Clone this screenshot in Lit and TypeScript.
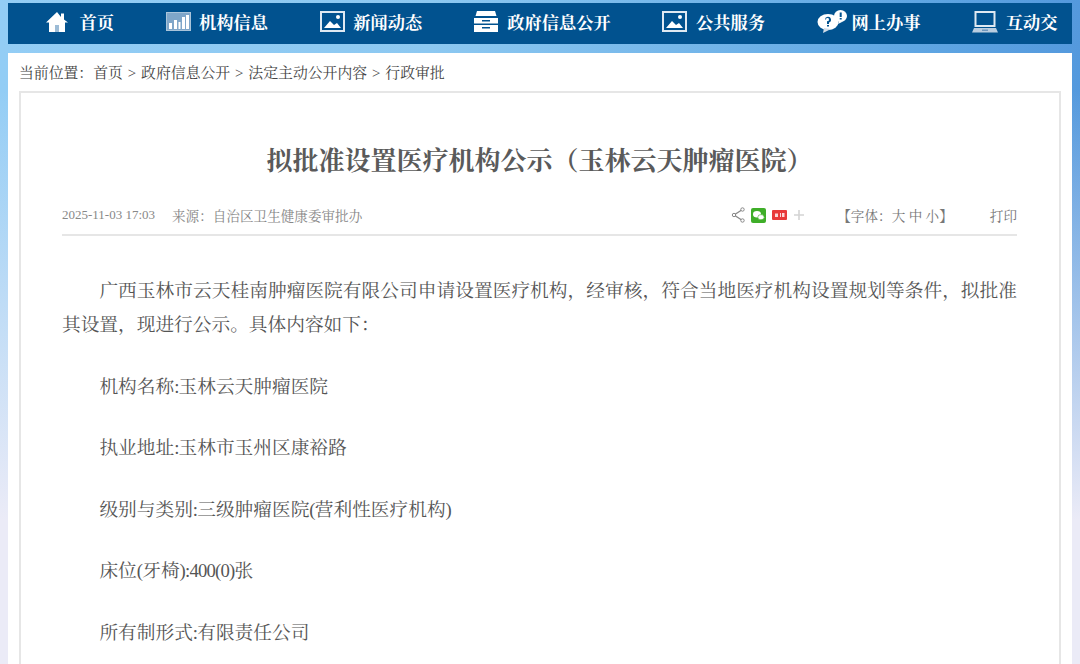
import { LitElement, html, css, svg } from "lit";
import { customElement } from "lit/decorators.js";

const picture = svg`<rect x="1" y="1" width="23" height="19" fill="none" stroke="#dfe9f2" stroke-width="2"/><path d="M4 17l6-7 4 4 3-2 4 5z" fill="#fff"/><circle cx="18" cy="6" r="2" fill="#fff"/>`;
const icons = [
  { w: 22, h: 20, b: svg`<path d="M11 0L0 10.500h3V20h6v-7h4v7h6v-9.500h3L18 7.500V1.500h-3V5z" fill="#fff"/><path d="M9 13h4v7H9z" fill="#9dbcd6"/>` },
  { w: 25, h: 19, b: svg`<rect x=".5" y=".5" width="24" height="18" fill="#7fa6c9" stroke="#a9c4da"/><path d="M3 11h3v6H3zM8 8h3v9H8zM12.500 10h2v7h-2zM16 5h3v12h-3zM20 3h3v14h-3z" fill="#fff"/>` },
  { w: 25, h: 21, b: picture },
  { w: 24, h: 21, b: svg`<path d="M3 0h18l1.500 5h-21z" fill="#fff"/><path d="M0 7h24v14H0z" fill="#fff"/><path d="M0 12.500h24v1.500H0z" fill="#01528f"/><path d="M8 9h8v1.500H8zM8 16h8v1.500H8z" fill="#01528f"/>` },
  { w: 25, h: 21, b: picture },
  { w: 30, h: 23, b: svg`<ellipse cx="11" cy="12" rx="10.500" ry="8" fill="#fff"/><path d="M7 18l-1 5 8-4z" fill="#cfdce8"/><path d="M8 9.500a3 3 0 1 1 4 3v1.500h-2v-3a1.500 1.500 0 1 0-1-1.500zM10 15h2v1.500h-2z" fill="#01528f"/><ellipse cx="23.500" cy="6" rx="6.500" ry="6" fill="#fff"/><path d="M22 11l-1 3 5-2.500z" fill="#fff"/><path d="M22.700 2.500h2v4.500h-2zM22.700 8h2v1.500h-2z" fill="#01528f"/>` },
  { w: 26, h: 22, b: svg`<rect x="3.500" y="1" width="19" height="14" fill="none" stroke="#dfe9f2" stroke-width="2"/><path d="M2 17h22l2 4.500H0z" fill="#b9cde0"/><path d="M10 18.500h6v1.500h-6z" fill="#6f97bd"/>` },
];
const items = ["首页", "机构信息", "新闻动态", "政府信息公开", "公共服务", "网上办事", "互动交"];
const paragraphs = [
  "机构名称:玉林云天肿瘤医院",
  "执业地址:玉林市玉州区康裕路",
  "级别与类别:三级肿瘤医院(营利性医疗机构)",
  "床位(牙椅):400(0)张",
  "所有制形式:有限责任公司",
];

const narrowLatin = (text: string) =>
  text.split(/([:()0-9]+)/).map((part, i) => (i % 2 ? html`<span class="lat">${part}</span>` : part));

@customElement("app-root")
export class AppRoot extends LitElement {
  static styles = css`
    :host {
      display: block;
      width: 1080px;
      height: 664px;
      overflow: hidden;
      box-sizing: border-box;
      padding: 3px 8px 0;
      font-family: "Liberation Serif", "Noto Serif CJK SC", "Noto Sans CJK SC", serif;
      background:
        linear-gradient(to bottom, rgba(235, 235, 247, 0) 0, rgba(235, 235, 247, 0) 90px, #ebebf7 520px),
        linear-gradient(to right, #93cdf5 0, #8cc8f1 40%, #5fa6e3 85%, #5499dd 100%);
    }
    .frame { display: flex; flex-direction: column; gap: 9px; height: 100%; }
    nav {
      flex: none;
      height: 41px;
      box-sizing: border-box;
      background: #01528f;
      display: flex;
      align-items: center;
      gap: 51.6px;
      padding: 0 0 4px 38px;
      overflow: hidden;
    }
    .item { display: flex; align-items: center; flex: none; color: #fff; font-size: 17.25px; font-weight: 700; white-space: nowrap; }
    .ico { width: 33.500px; display: flex; }
    .ico.wide { width: 35px; }
    .panel { flex: 1; min-height: 0; background: #fff; padding: 0 11px; overflow: hidden; }
    .crumb { height: 38px; box-sizing: border-box; padding-bottom: 2px; display: flex; align-items: center; font-size: 14.85px; word-spacing: 1.200px; color: #444; white-space: pre; }
    .card { border: 2px solid #e6e6e6; border-bottom: 0; padding: 0 42px 0 41px; height: 600px; }
    h1 { margin: 0; padding-top: 52px; height: 36px; line-height: 34px; text-align: center; font-size: 26px; font-weight: 700; color: #5a5a5a; }
    .meta {
      margin-top: 15px;
      height: 38px;
      display: flex;
      align-items: center;
      font-size: 13.6px;
      color: #888;
      border-bottom: 2px solid #e6e6e6;
      white-space: pre;
    }
    .date { width: 110px; font-size: 13px; }
    .spacer { flex: 1; }
    .share { display: flex; align-items: center; gap: 6px; }
    .plus { margin-left: 1px; }
    .size { margin-left: 33px; color: #777; }
    .print { margin-left: 37px; color: #777; }
    .body { margin-top: 38px; color: #555; font-size: 18.7px; line-height: 34px; }
    p { margin: 0 0 27.500px; text-indent: 2em; text-align: justify; }
    .lat { letter-spacing: -0.8px; }
  `;

  render() {
    return html`<div class="frame">
      <nav>
        ${items.map((t, i) => html`<div class="item">
          <span class="ico ${i === 5 ? "wide" : ""}"><svg width=${icons[i].w} height=${icons[i].h} viewBox="0 0 ${icons[i].w} ${icons[i].h}">${icons[i].b}</svg></span>${t}
        </div>`)}
      </nav>
      <div class="panel">
        <div class="crumb">当前位置：首页 &gt; 政府信息公开 &gt; 法定主动公开内容 &gt; 行政审批</div>
        <div class="card">
          <h1>拟批准设置医疗机构公示（玉林云天肿瘤医院）</h1>
          <div class="meta">
            <span class="date">2025-11-03 17:03</span><span>来源：自治区卫生健康委审批办</span>
            <span class="spacer"></span>
            <span class="share">
              <svg width="14" height="16" viewBox="0 0 14 16"><path d="M11.500 2.500L3 8l8.500 5.500" fill="none" stroke="#888" stroke-width="1.300"/><circle cx="11.500" cy="2.500" r="1.700" fill="#fff" stroke="#888"/><circle cx="3" cy="8" r="1.700" fill="#fff" stroke="#888"/><circle cx="11.500" cy="13.500" r="1.700" fill="#fff" stroke="#888"/></svg>
              <svg width="15" height="15" viewBox="0 0 15 15"><rect width="15" height="15" rx="2" fill="#3fae29"/><ellipse cx="6" cy="6.200" rx="4" ry="3.200" fill="#fff"/><ellipse cx="10" cy="9.200" rx="3.200" ry="2.600" fill="#fff" stroke="#3fae29" stroke-width=".6"/></svg>
              <svg width="15" height="10" viewBox="0 0 15 10"><rect width="15" height="10" rx="1" fill="#e8393a"/><path d="M3 3.500h3v3.500H3zM8 3h1v4H8zM10 3h2.500v4H10z" fill="#fbd6d6"/></svg>
              <svg class="plus" width="10" height="10" viewBox="0 0 10 10"><path d="M5 0v10M0 5h10" stroke="#d4d4d4" stroke-width="1.600"/></svg>
            </span>
            <span class="size">【字体：大 中 小】</span>
            <span class="print">打印</span>
          </div>
          <div class="body">
            <p>广西玉林市云天桂南肿瘤医院有限公司申请设置医疗机构，经审核，符合当地医疗机构设置规划等条件，拟批准其设置，现进行公示。具体内容如下：</p>
            ${paragraphs.map((t) => html`<p>${narrowLatin(t)}</p>`)}
          </div>
        </div>
      </div>
    </div>`;
  }
}
